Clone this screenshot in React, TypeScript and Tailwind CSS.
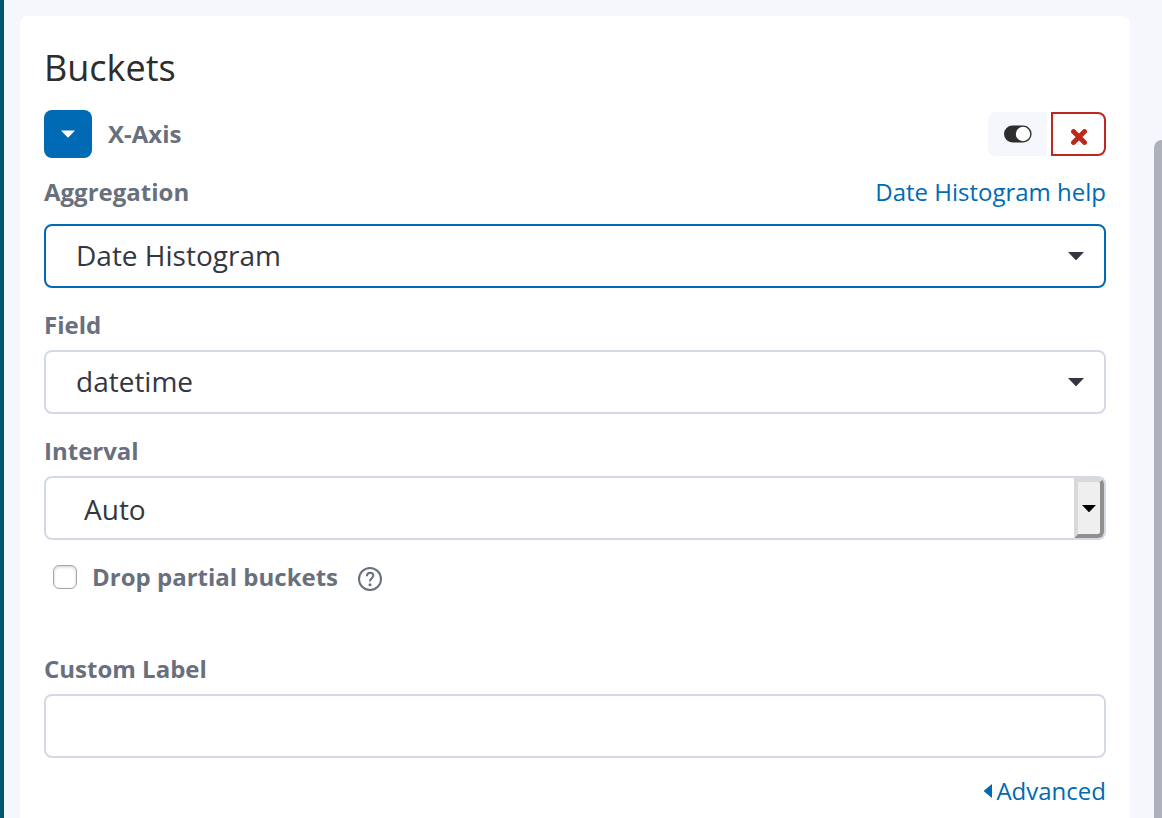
import { useState } from "react";
import type { ReactNode } from "react";

const fieldClass =
  "block h-16 w-full appearance-none rounded-lg border-2 bg-white pr-20 text-[28px] text-[#343741] outline-none";
const labelClass = "text-2xl leading-10 font-bold text-[#69707d]";
const linkClass = "text-2xl leading-10 text-[#006bb4]";

function Caret({ className }: { className: string }) {
  return (
    <svg viewBox="0 0 16 8" className={className} fill="currentColor" aria-hidden="true">
      <path d="M0 0h16L8.6 7.7a.8.8 0 0 1-1.2 0z" />
    </svg>
  );
}

function Field({
  id,
  label,
  aside,
  children,
}: {
  id: string;
  label: string;
  aside?: ReactNode;
  children: ReactNode;
}) {
  return (
    <div className={aside ? "flex flex-col gap-3" : "flex flex-col gap-[5px]"}>
      <div className="flex items-center justify-between">
        <label htmlFor={id} className={labelClass}>
          {label}
        </label>
        {aside}
      </div>
      <div className="relative">{children}</div>
    </div>
  );
}

export default function App() {
  const [open, setOpen] = useState(true);
  const [enabled, setEnabled] = useState(true);

  return (
    <div className="flex h-screen overflow-hidden bg-[#f5f7fc] font-['Open_Sans','Noto_Sans',sans-serif]">
      <div className="w-1 shrink-0 bg-[#005571]" />
      <main className="min-w-0 flex-1 pt-4 pr-6 pl-4">
        <section className="min-h-full rounded-lg bg-white px-6 pt-7 pb-6">
          <h2 className="text-4xl leading-12 text-[#2d2d2d]">Buckets</h2>

          <div className="mt-[18px] flex items-center gap-4">
            <button
              type="button"
              aria-label="Toggle X-Axis editor"
              aria-expanded={open}
              onClick={() => setOpen(!open)}
              className="flex size-12 items-center justify-center rounded-lg bg-[#006bb4] text-white"
            >
              <Caret className="h-2 w-3.5" />
            </button>
            <span className="flex-1 text-2xl font-bold text-[#69707d]">X-Axis</span>
            <div className="flex gap-1">
              <button
                type="button"
                aria-label="Disable aggregation"
                aria-pressed={enabled}
                onClick={() => setEnabled(!enabled)}
                className="flex h-11 w-[59px] items-center justify-center rounded-l-lg bg-[#f5f7fc]"
              >
                <svg viewBox="0 0 28 18" className="h-[18px] w-7" aria-hidden="true">
                  <rect x="0" y="0.5" width="27.6" height="17" rx="8.5" fill="#2d2d2d" />
                  <circle cx="19" cy="9" r="7.2" fill="#fff" />
                </svg>
              </button>
              <button
                type="button"
                aria-label="Remove dimension"
                className="flex h-11 w-[55px] items-center justify-center rounded-r-lg border-2 border-[#bd271e] bg-white pt-1.5"
              >
                <svg viewBox="0 0 16 16" className="size-4" aria-hidden="true">
                  <path d="M2.5 2.5l11 11M13.5 2.5l-11 11" stroke="#bd271e" strokeWidth="4.8" strokeLinecap="round" />
                </svg>
              </button>
            </div>
          </div>

          {open && (
            <div className="mt-3.5 flex flex-col gap-[17px]">
              <Field
                id="aggregation"
                label="Aggregation"
                aside={
                  <a href="#help" className={linkClass}>
                    Date Histogram help
                  </a>
                }
              >
                <select id="aggregation" className={`${fieldClass} border-[#006bb4] pb-0.5 pl-[30px]`}>
                  <option>Date Histogram</option>
                  <option>Histogram</option>
                  <option>Terms</option>
                </select>
                <Caret className="pointer-events-none absolute top-7 right-[22px] h-2 w-4 text-[#343741]" />
              </Field>

              <Field id="field" label="Field">
                <select id="field" className={`${fieldClass} border-[#d3dae6] pb-0.5 pl-[30px]`}>
                  <option>datetime</option>
                </select>
                <Caret className="pointer-events-none absolute top-7 right-[22px] h-2 w-4 text-[#343741]" />
              </Field>

              <Field id="interval" label="Interval">
                <select id="interval" className={`${fieldClass} border-[#d3dae6] pt-0.5 pl-[38px]`}>
                  <option>Auto</option>
                  <option>Hourly</option>
                  <option>Daily</option>
                </select>
                <span className="pointer-events-none absolute inset-y-0.5 right-0.5 flex w-[30px] items-center justify-center rounded-r-md border-4 border-t-[#d9d9d9] border-r-[#8f8f8f] border-b-[#8f8f8f] border-l-[#d9d9d9] bg-[#efefef] text-black">
                  <Caret className="h-[7px] w-3.5" />
                </span>
              </Field>

              <div className="flex h-10 items-center pl-[9px]">
                <input
                  id="drop-partials"
                  type="checkbox"
                  className="size-6 appearance-none rounded-md border border-[#a6a6a6] bg-white shadow-[inset_0_1px_3px_#00000033] checked:bg-[#006bb4]"
                />
                <label htmlFor="drop-partials" className="ml-[15px] text-2xl font-bold text-[#69707d]">
                  Drop partial buckets
                </label>
                <svg viewBox="0 0 24 24" className="mt-1 ml-5 size-6" fill="none" stroke="#69707d" aria-label="Help" role="img">
                  <circle cx="12" cy="12" r="11" strokeWidth="2" />
                  <path d="M8.9 9.2c0-2.2 1.3-3.5 3.2-3.5 1.9 0 3.2 1.2 3.2 2.9 0 1.4-.7 2-1.7 2.8-1.1.9-1.6 1.4-1.6 3.2" strokeWidth="2" />
                  <circle cx="12" cy="17.8" r="1.5" fill="#69707d" stroke="none" />
                </svg>
              </div>

              <div className="mt-[35px]">
                <Field id="custom-label" label="Custom Label">
                  <input id="custom-label" type="text" className={`${fieldClass} border-[#d3dae6] pl-[30px]`} />
                </Field>
              </div>

              <button type="button" className={`${linkClass} -mt-1 flex items-center gap-1 self-end`}>
                <svg viewBox="0 0 8 14" className="h-3.5 w-2" fill="currentColor" aria-hidden="true">
                  <path d="M8 0v14L.4 7.7a.9.9 0 0 1 0-1.4z" />
                </svg>
                Advanced
              </button>
            </div>
          )}
        </section>
      </main>
      <div className="mt-35 w-2 shrink-0 rounded-tl-lg bg-[#adb1bb]" />
    </div>
  );
}
